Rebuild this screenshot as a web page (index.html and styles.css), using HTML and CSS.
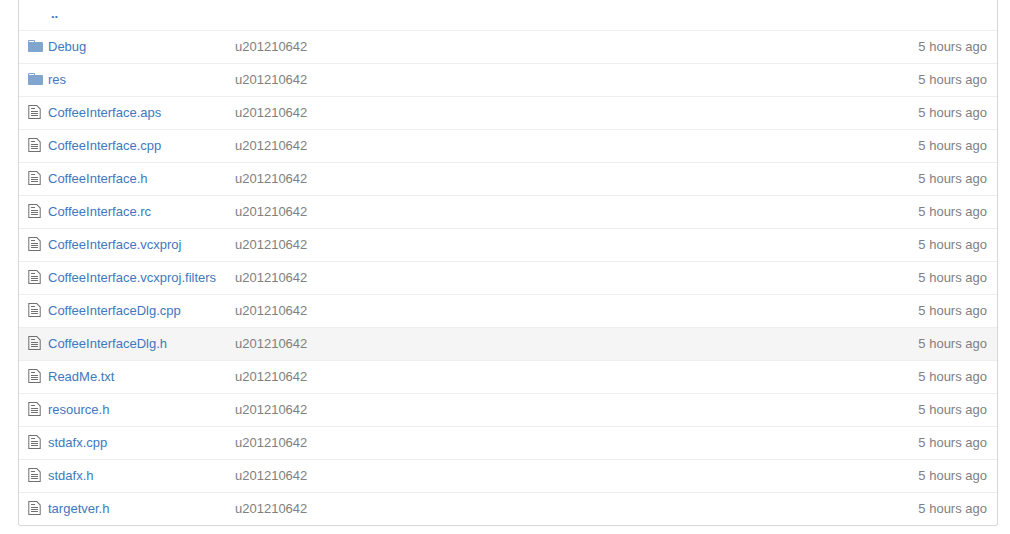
FILE: index.html
```
<!DOCTYPE html>
<html lang="en">
<head>
<meta charset="utf-8">
<title>Files</title>
<link rel="stylesheet" href="styles.css">
</head>
<body>
<svg class="sprite" aria-hidden="true">
  <symbol id="folder" viewBox="0 0 15 12"><path fill-rule="evenodd" d="M0 1Q0 0 1 0H6Q7 0 7 1V2H14Q15 2 15 3V11Q15 12 14 12H1Q0 12 0 11ZM1 1V2H6V1Z"/></symbol>
  <symbol id="file" viewBox="0 0 13 14"><path fill-rule="evenodd" d="M.3 0H9L12.7 3.7V14H.3ZM1.3 1V13H11.7V4.2L8.5 1ZM3 3H7V4H3ZM3 6H10V7H3ZM3 8H10V9H3ZM3 10H10V11H3Z"/></symbol>
</svg>
<main class="file-wrap">
  <table class="files">
    <tbody id="rows">
      <tr class="up"><td class="icon"></td><td class="name"><a class="up-link" href="#">..</a></td><td class="message"></td><td class="age"></td></tr>
    </tbody>
  </table>
</main>
<script src="files.js"></script>
</body>
</html>
```
FILE: styles.css
```
body {
  margin: 0;
  background: #fff;
  color: #808080;
  font: 13px/20px "Liberation Sans", Arial, sans-serif;
}

.sprite {
  display: none;
}

.file-wrap {
  margin: 0 12px 8px 18px;
  border: 1px solid #d8d8d8;
  border-top: 0;
  border-radius: 0 0 3px 3px;
}

.files {
  width: 100%;
  border-spacing: 0;
}

.files td {
  padding: 6px 0;
  border-top: 1px solid #eee;
  white-space: nowrap;
}

.files .up td {
  height: 20px;
  padding: 4px 0 6px;
  border-top: 0;
}

.files .icon {
  width: 20px;
  padding-bottom: 8px;
  padding-left: 9px;
}

.files .name {
  width: 171px;
  padding-right: 16px;
}

.files .age {
  padding-right: 10px;
  text-align: right;
}

.highlighted {
  background: #f5f5f5;
}

a {
  color: #4078c0;
  text-decoration: none;
}

a:hover {
  text-decoration: underline;
}

.up-link {
  padding-left: 3px;
  font-weight: bold;
}

.glyph {
  display: block;
  fill: #707070;
}

.glyph.folder {
  width: 15px;
  height: 12px;
  fill: #80a6cd;
}

.glyph.file {
  width: 13px;
  height: 14px;
}
```
FILE: files.js
```
const files = [
  ["folder", "Debug"],
  ["folder", "res"],
  ["file", "CoffeeInterface.aps"],
  ["file", "CoffeeInterface.cpp"],
  ["file", "CoffeeInterface.h"],
  ["file", "CoffeeInterface.rc"],
  ["file", "CoffeeInterface.vcxproj"],
  ["file", "CoffeeInterface.vcxproj.filters"],
  ["file", "CoffeeInterfaceDlg.cpp"],
  ["file", "CoffeeInterfaceDlg.h", "highlighted"],
  ["file", "ReadMe.txt"],
  ["file", "resource.h"],
  ["file", "stdafx.cpp"],
  ["file", "stdafx.h"],
  ["file", "targetver.h"]
];

document.getElementById("rows").insertAdjacentHTML("beforeend", files.map(([kind, name, state = ""]) => `
  <tr class="${state}">
    <td class="icon"><svg class="glyph ${kind}" aria-hidden="true"><use href="#${kind}"/></svg></td>
    <td class="name"><a href="#">${name}</a></td>
    <td class="message">u201210642</td>
    <td class="age">5 hours ago</td>
  </tr>`).join(""));
```
